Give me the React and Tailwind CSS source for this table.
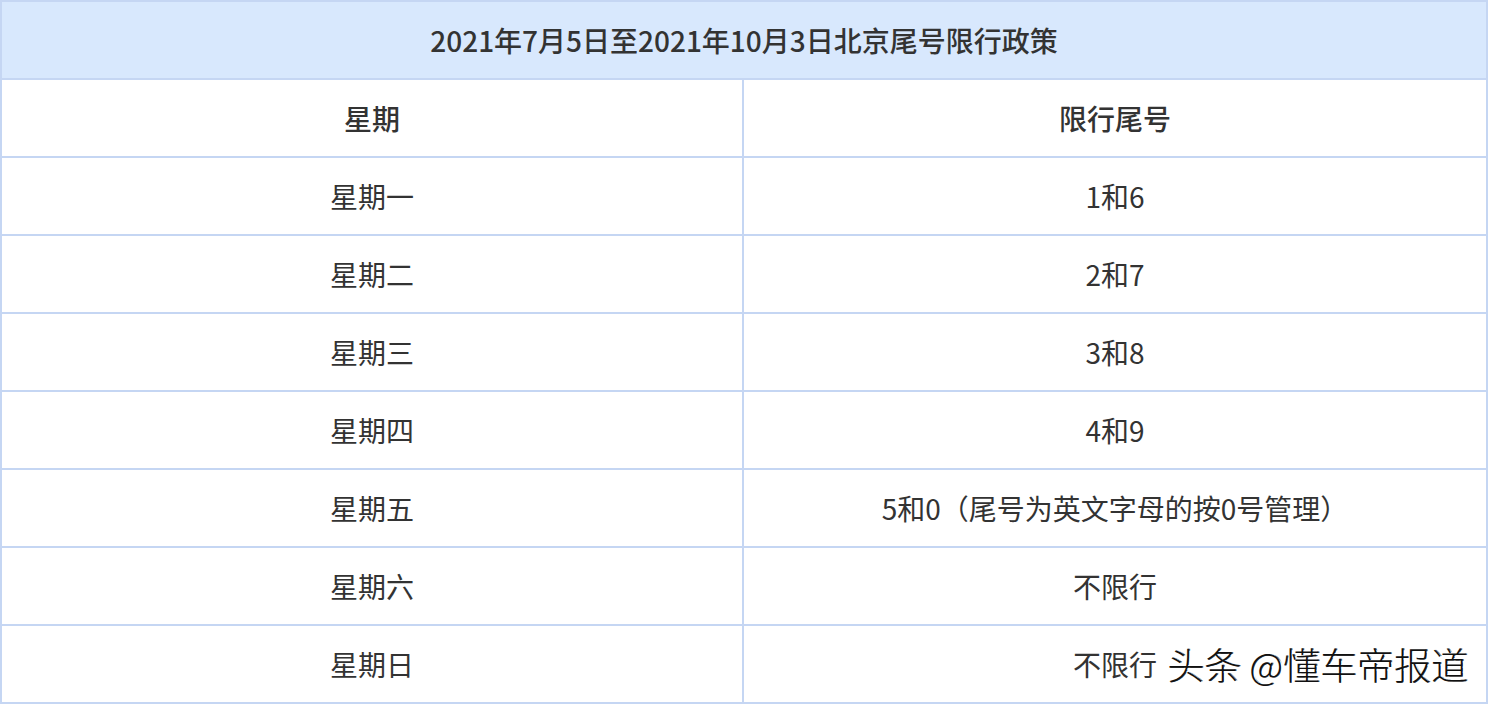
import React from "react";

const rows = [
  ["星期一", "1和6"],
  ["星期二", "2和7"],
  ["星期三", "3和8"],
  ["星期四", "4和9"],
  ["星期五", "5和0（尾号为英文字母的按0号管理）"],
  ["星期六", "不限行"],
  ["星期日", "不限行"],
];

export default function App() {
  const font = { fontFamily: '"Noto Sans CJK SC", "Noto Sans", sans-serif' };
  return (
    <div className="w-[1492px] h-[706px] bg-white" style={font}>
      <div className="w-[1488px] border-2 border-b-0 border-[#c5d6f3] text-[28px] text-[#333333]">
        <div className="h-[78px] border-b-2 border-[#c5d6f3] bg-[#d8e8fd] flex items-center justify-center font-medium">
          2021年7月5日至2021年10月3日北京尾号限行政策
        </div>
        <div className="grid grid-cols-[742px_1fr] h-[78px] border-b-2 border-[#c5d6f3] font-medium">
          <div className="border-r-2 border-[#c5d6f3] flex items-center justify-center">星期</div>
          <div className="flex items-center justify-center">限行尾号</div>
        </div>
        {rows.map(([a, b], i) => (
          <div key={i} className="relative grid grid-cols-[742px_1fr] h-[78px] border-b-2 border-[#c5d6f3]">
            <div className="border-r-2 border-[#c5d6f3] flex items-center justify-center">{a}</div>
            <div className="flex items-center justify-center">{b}</div>
            {i === rows.length - 1 && (
              <div
                className="absolute right-[18px] top-[20px] text-[37px] font-light text-[#111111] leading-none whitespace-nowrap"
                style={{ textShadow: "2px 2px 0 #ffffff, -1px -1px 0 #ffffff, 1px 0 0 #555555" }}
              >
                头条 @懂车帝报道
              </div>
            )}
          </div>
        ))}
      </div>
    </div>
  );
}
